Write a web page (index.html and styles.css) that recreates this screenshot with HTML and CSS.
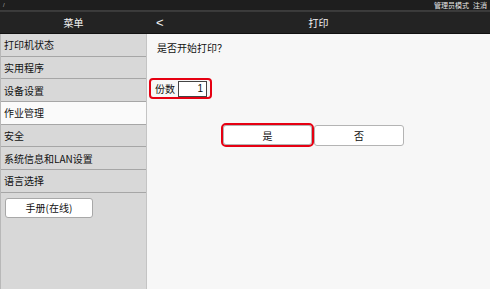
FILE: index.html
```html
<!DOCTYPE html>
<html lang="zh">
<head>
<meta charset="utf-8">
<link rel="stylesheet" href="styles.css">
</head>
<body>
<div class="page">
  <div class="topbar">
    <span class="slash">/</span>
    <span class="admin"><span>管理员模式</span><span class="logout">注消</span></span>
  </div>
  <div class="header">
    <div class="h-left">菜单</div>
    <div class="h-right">
      <span class="back">&lt;</span>
      <span class="h-title">打印</span>
    </div>
  </div>
  <div class="main">
    <div class="sidebar">
      <div class="item">打印机状态</div>
      <div class="item">实用程序</div>
      <div class="item">设备设置</div>
      <div class="item active">作业管理</div>
      <div class="item">安全</div>
      <div class="item">系统信息和LAN设置</div>
      <div class="item">语言选择</div>
      <div class="manual-wrap"><div class="manual">手册(在线)</div></div>
    </div>
    <div class="content">
      <div class="question">是否开始打印？</div>
      <div class="copies">
        <span class="copies-label">份数</span>
        <span class="copies-input">1</span>
      </div>
      <div class="buttons">
        <div class="btn yes">是</div>
        <div class="btn no">否</div>
      </div>
    </div>
  </div>
</div>
</body>
</html>
```
FILE: styles.css
```css
* { box-sizing: border-box; }
html, body { margin: 0; padding: 0; }
body {
  width: 490px;
  height: 289px;
  overflow: hidden;
  font-family: "Noto Sans CJK SC", "Noto Sans", sans-serif;
  font-size: 10px;
  color: #111;
  background: #f7f7f7;
}
.page { display: flex; flex-direction: column; height: 289px; }
.topbar {
  height: 11px;
  background: #1e1e1e;
  border-bottom: 1px solid #3c3c3c;
  display: flex;
  justify-content: space-between;
  align-items: center;
  color: #ccc;
  font-size: 7px;
  line-height: 10px;
  padding: 0 3px 0 3px;
}
.slash { font-family: "Liberation Sans", sans-serif; font-size: 6px; color: #aaa; }
.admin { color: #e8e8e8; display: flex; gap: 4px; }
.header {
  height: 23px;
  background: #232323;
  border-top: 1px solid #3a3a3a;
  border-bottom: 1px solid #111;
  display: flex;
  color: #f2f2f2;
  font-size: 10px;
}
.h-left {
  width: 147px;
  display: flex;
  align-items: center;
  justify-content: center;
}
.h-right { flex: 1; display: flex; align-items: center; position: relative; }
.back {
  font-family: "Liberation Sans", sans-serif;
  font-size: 13px;
  margin-left: 9px;
}
.h-title { position: absolute; left: 0; right: 0; text-align: center; }
.main { flex: 1; display: flex; }
.sidebar {
  width: 147px;
  background: #d8d8d8;
  border-left: 1px solid #b8b8b8;
  border-right: 1px solid #c4c4c4;
}
.item {
  height: 22.7px;
  border-bottom: 1px solid #a6a6a6;
  padding-left: 3px;
  display: flex;
  align-items: center;
  font-size: 10px;
  color: #111;
}
.item.active { background: #fafafa; }
.manual-wrap { padding: 5px 0 0 4px; }
.manual {
  width: 88px;
  height: 20px;
  background: #fff;
  border: 1px solid #a8a8a8;
  border-radius: 3px;
  display: flex;
  align-items: center;
  justify-content: center;
  font-size: 10px;
}
.content { flex: 1; padding: 7px 0 0 2px; }
.question { padding-left: 8px; height: 18px; line-height: 14px; }
.copies {
  margin-top: 19px;
  width: 63px;
  height: 21px;
  border: 2px solid #e60012;
  border-radius: 4px;
  display: flex;
  align-items: center;
  padding-left: 4px;
  gap: 3px;
}
.copies-input {
  width: 29px;
  height: 16px;
  border: 1px solid #444;
  background: #fff;
  text-align: right;
  padding-right: 3px;
  line-height: 14px;
  font-family: "Liberation Sans", sans-serif;
}
.buttons { display: flex; margin: 24px 0 0 72px; align-items: center; }
.btn {
  height: 21px;
  border: 1px solid #b4b4b4;
  border-radius: 3px;
  background: #fff;
  display: flex;
  align-items: center;
  justify-content: center;
}
.yes { width: 93px; height: 24px; border: 2px solid #e60012; border-radius: 5px; box-shadow: inset 0 0 0 1px #b4b4b4; }
.no { width: 90px; }
```
